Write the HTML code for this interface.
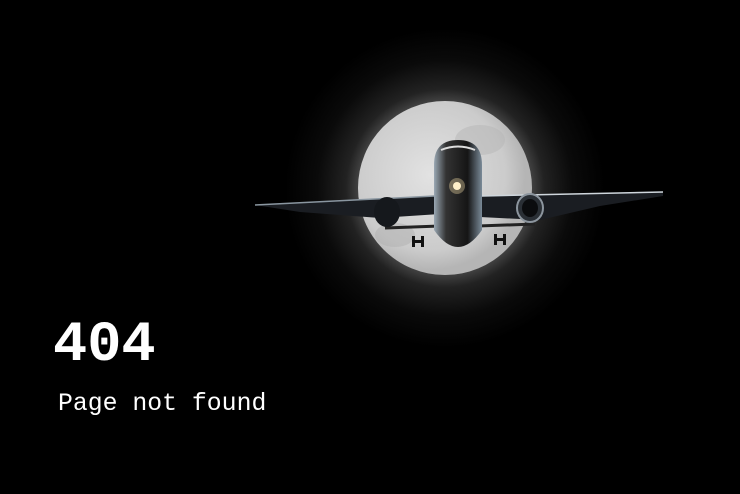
<!DOCTYPE html>
<html><head><meta charset="utf-8"><style>
html,body{margin:0;padding:0;background:#000;width:740px;height:494px;overflow:hidden}
svg{position:absolute;left:0;top:0}
.t1{position:absolute;left:53px;top:311px;font:bold 57px "Liberation Mono",monospace;color:#fff;line-height:70px;margin:0}
.t2{position:absolute;left:58px;top:389px;font:24.8px "Liberation Mono",monospace;color:#fff;line-height:30px;margin:0}
</style></head><body>
<svg width="740" height="494" viewBox="0 0 740 494">
<defs>
<radialGradient id="glow" cx="445" cy="188" r="160" gradientUnits="userSpaceOnUse">
<stop offset="0.52" stop-color="#4a4a4a"/><stop offset="0.62" stop-color="#222"/><stop offset="0.8" stop-color="#0a0a0a"/><stop offset="1" stop-color="#000"/>
</radialGradient>
<radialGradient id="moon" cx="430" cy="175" r="95" gradientUnits="userSpaceOnUse">
<stop offset="0" stop-color="#e2e2e2"/><stop offset="0.8" stop-color="#cbcbcb"/><stop offset="1" stop-color="#b5b5b5"/>
</radialGradient>
<linearGradient id="fus" x1="0" x2="1"><stop offset="0" stop-color="#9aa8b4"/><stop offset="0.25" stop-color="#333"/><stop offset="0.7" stop-color="#151515"/><stop offset="1" stop-color="#7a8a98"/></linearGradient>
</defs>
<rect width="740" height="494" fill="#000"/>
<circle cx="445" cy="188" r="160" fill="url(#glow)"/>
<circle cx="445" cy="188" r="87" fill="url(#moon)"/>
<ellipse cx="480" cy="140" rx="25" ry="15" fill="#b5b5b5" opacity=".5"/>
<ellipse cx="395" cy="235" rx="20" ry="12" fill="#b0b0b0" opacity=".5"/>
<path d="M255 205 L435 196 L440 214 L380 218 L300 212 Z" fill="#1a1d22"/>
<path d="M482 196 L663 192 L663 196 L600 206 L540 220 L480 217 Z" fill="#1a1d22"/>
<path d="M255 205 L435 196" stroke="#8a96a0" stroke-width="1.5"/>
<path d="M482 196 L663 192" stroke="#cfd6dc" stroke-width="1.5"/>
<path d="M385 228 L440 226 M478 226 L535 224" stroke="#222" stroke-width="3"/>
<ellipse cx="387" cy="212" rx="13" ry="15" fill="#15181c"/>
<ellipse cx="530" cy="208" rx="13" ry="14" fill="#2a2f35" stroke="#8c959e" stroke-width="2"/>
<ellipse cx="530" cy="208" rx="8" ry="9" fill="#0b0c0e"/>
<path d="M434 165 Q434 140 458 140 Q482 140 482 165 L482 230 Q470 247 458 247 Q446 247 434 230 Z" fill="url(#fus)"/>
<path d="M441 150 Q458 143 475 150" stroke="#ddd" stroke-width="2" fill="none"/>
<circle cx="457" cy="186" r="4" fill="#fff4d8"/>
<circle cx="457" cy="186" r="8" fill="#ffe8b0" opacity=".35"/>
<rect x="412" y="236" width="3" height="11" fill="#111"/><rect x="421" y="236" width="3" height="11" fill="#111"/><rect x="412" y="240" width="12" height="3" fill="#111"/>
<rect x="494" y="234" width="3" height="11" fill="#111"/><rect x="503" y="234" width="3" height="11" fill="#111"/><rect x="494" y="238" width="12" height="3" fill="#111"/>
</svg>
<div class="t1">404</div>
<div class="t2">Page not found</div>
</body></html>
